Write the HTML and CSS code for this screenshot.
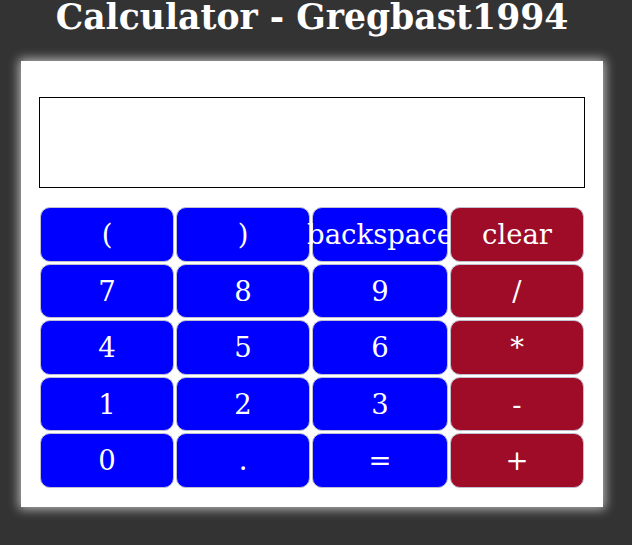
FILE: index.html
```html
<!DOCTYPE html>
<html>
<head>
<meta charset="utf-8">
<title>Calculator</title>
<link rel="stylesheet" href="styles.css">
</head>
<body>
<h1 class="title">Calculator - Gregbast1994</h1>
<div class="calc">
  <div class="display"></div>
  <div class="keys">
    <button class="key">(</button>
    <button class="key">)</button>
    <button class="key">backspace</button>
    <button class="key op">clear</button>
    <button class="key">7</button>
    <button class="key">8</button>
    <button class="key">9</button>
    <button class="key op">/</button>
    <button class="key">4</button>
    <button class="key">5</button>
    <button class="key">6</button>
    <button class="key op">*</button>
    <button class="key">1</button>
    <button class="key">2</button>
    <button class="key">3</button>
    <button class="key op">-</button>
    <button class="key">0</button>
    <button class="key">.</button>
    <button class="key">=</button>
    <button class="key op">+</button>
  </div>
</div>
</body>
</html>
```
FILE: styles.css
```css
html, body {
  margin: 0;
  padding: 0;
  background: #333333;
}
body {
  font-family: "DejaVu Serif", serif;
  color: #fff;
  padding-bottom: 30px;
}
.title {
  margin: 0;
  padding-right: 8px;
  font-size: 34.6px;
  font-weight: bold;
  text-align: center;
  line-height: 35px;
  color: #fff;
}
.calc {
  margin: 26px 0 0 21px;
  width: 582px;
  height: 446px;
  box-sizing: border-box;
  background: #fff;
  box-shadow: 0 0 10px 2px #bbb;
  padding: 36px 18px 0 18px;
}
.display {
  width: 546px;
  height: 91px;
  box-sizing: border-box;
  border: 1px solid #000;
}
.keys {
  margin: 19px 0 0 1px;
  display: grid;
  grid-template-columns: 134px 134px 136px 134px;
  grid-template-rows: repeat(5, 54.5px);
  gap: 2px;
}
.key {
  margin: 0;
  padding: 0;
  font-family: "DejaVu Serif", serif;
  font-size: 27.5px;
  color: #fff;
  background: #0000ff;
  border: 1px solid #c0c0d0;
  border-radius: 10px;
  white-space: nowrap;
  overflow: visible;
  display: flex;
  align-items: center;
  justify-content: center;
}
.key.op {
  background: #9e0c28;
}
```
